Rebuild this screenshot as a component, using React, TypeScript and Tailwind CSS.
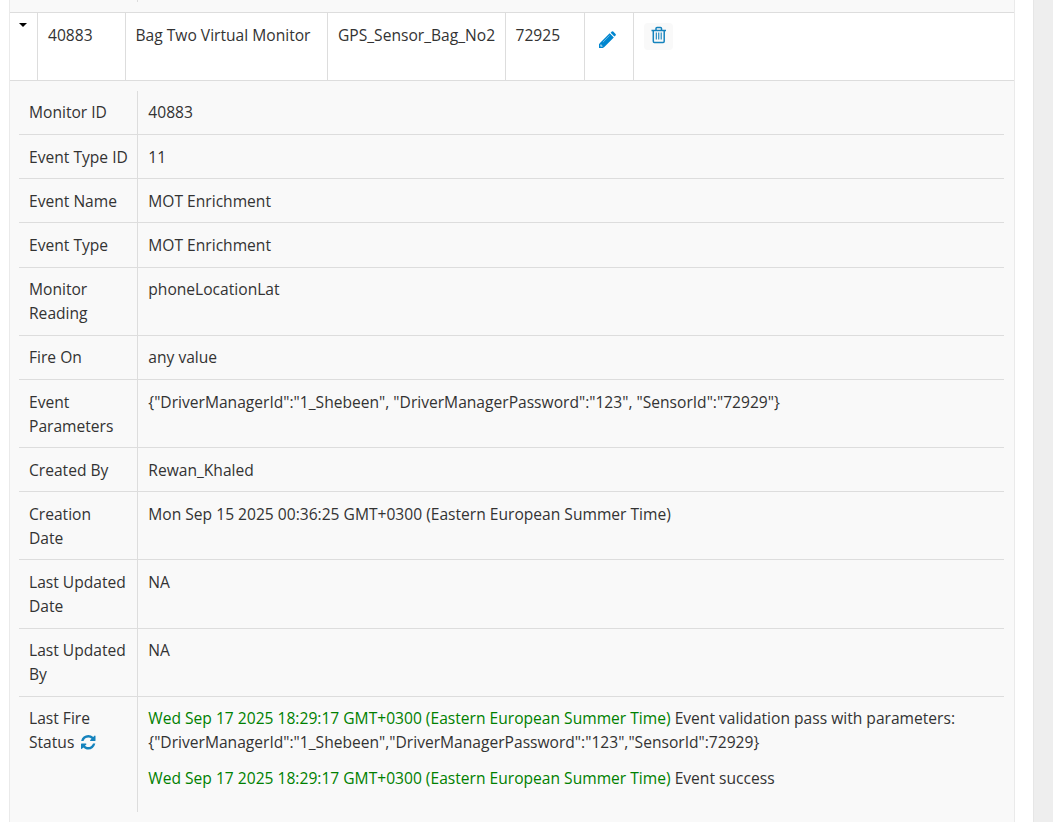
import React from "react";

const rows: { label: string; value: string; height: string; pad: string }[] = [
  { label: "Monitor ID", value: "40883", height: "h-[44px]", pad: "pt-[9px]" },
  { label: "Event Type ID", value: "11", height: "h-[44px]", pad: "pt-[10px]" },
  { label: "Event Name", value: "MOT Enrichment", height: "h-[44px]", pad: "pt-[10px]" },
  { label: "Event Type", value: "MOT Enrichment", height: "h-[45px]", pad: "pt-[10px]" },
  { label: "Monitor Reading", value: "phoneLocationLat", height: "h-[68px]", pad: "pt-[9px]" },
  { label: "Fire On", value: "any value", height: "h-[44px]", pad: "pt-[9px]" },
  {
    label: "Event Parameters",
    value: '{"DriverManagerId":"1_Shebeen", "DriverManagerPassword":"123", "SensorId":"72929"}',
    height: "h-[68px]",
    pad: "pt-[10px]",
  },
  { label: "Created By", value: "Rewan_Khaled", height: "h-[44px]", pad: "pt-[10px]" },
  {
    label: "Creation Date",
    value: "Mon Sep 15 2025 00:36:25 GMT+0300 (Eastern European Summer Time)",
    height: "h-[68px]",
    pad: "pt-[10px]",
  },
  { label: "Last Updated Date", value: "NA", height: "h-[69px]", pad: "pt-[10px]" },
  { label: "Last Updated By", value: "NA", height: "h-[68px]", pad: "pt-[9px]" },
];

function PencilIcon() {
  return (
    <svg viewBox="0 0 17 17" className="h-[17px] w-[17px]" fill="#0086cf">
      <path d="M11.600 1.700 12.800.500q.700-.600 1.400 0l2.400 2.400q.600.700 0 1.400L15.400 5.500z" />
      <path fillRule="evenodd" d="M10.700 2.300 14.800 6.400 5.300 15.900 3.800 17H0V13.200L1.200 11.800zM1.500 13.500V15.600H3.500V14.800H2.400V13.500z" />
      <path d="M3.900 11.200 10.600 4.500" fill="none" stroke="#a9d8f1" strokeWidth=".6" />
    </svg>
  );
}

function TrashIcon() {
  return (
    <svg viewBox="0 0 16 18" className="h-[18px] w-4" fill="none" stroke="#1583bd">
      <path d="M.5 4.500H15" strokeWidth="1.500" />
      <path d="M5 4.500V2.500Q5 1.500 6 1.500H9.500Q10.500 1.500 10.500 2.500V4.500M2.300 4.500V15.200Q2.300 16.400 3.400 16.400H12.100Q13.200 16.400 13.200 15.200V4.500" strokeWidth="1.500" />
      <path d="M5.300 6.500V13.500M7.750 6.500V13.500M10.200 6.500V13.500" strokeWidth="1.100" />
    </svg>
  );
}

function RefreshIcon() {
  return (
    <svg viewBox="0 0 1536 1536" className="ml-[7px] inline-block h-[14.5px] w-[14.5px] align-[-1.5px]" fill="#1583bd">
      <path d="M1511 928q0 5-1 7-64 268-268 434.500t-478 166.500q-146 0-282.500-55t-243.500-157l-129 129q-19 19-45 19t-45-19-19-45v-448q0-26 19-45t45-19h448q26 0 45 19t19 45-19 45l-137 137q71 66 161 102t187 36q134 0 250-65t186-179q11-17 53-117 8-23 30-23h192q13 0 22.500 9.500t9.500 22.500zM1536 128v448q0 26-19 45t-45 19h-448q-26 0-45-19t-19-45 19-45l138-138q-148-137-349-137-134 0-250 65t-186 179q-11 17-53 117-8 23-30 23h-199q-13 0-22.500-9.500t-9.500-22.500v-7q65-268 270-434.500t480-166.500q146 0 284 55.500t245 156.500l130-129q19-19 45-19t45 19 19 45z" />
    </svg>
  );
}

export default function App() {
  return (
    <div className="flex h-[822px] w-full overflow-hidden bg-white pl-[9px] font-['Open_Sans',sans-serif] text-[15.6px] leading-6 text-[#333]">
      <main className="w-[1006px] shrink-0 border-x border-[#eaeaea] bg-[#f9f9f9]">
        <div className="flex h-3 items-start pl-[127px]">
          <div className="h-0.5 w-px bg-[#ddd]" />
        </div>
        <div className="flex h-[69px] border-y border-[#ddd] bg-white">
          <div className="w-7 shrink-0 border-r border-[#ddd] pl-[9px] pt-[10px]">
            <div className="h-0 w-0 border-x-4 border-t-4 border-x-transparent border-t-black" />
          </div>
          <div className="w-[88px] shrink-0 border-r border-[#ddd] pl-[10px] pt-[10px]">40883</div>
          <div className="w-[202px] shrink-0 whitespace-nowrap border-r border-[#ddd] pl-[9.5px] pt-[10px]">Bag Two Virtual Monitor</div>
          <div className="w-[178px] shrink-0 whitespace-nowrap border-r border-[#ddd] pl-[10px] pt-[10px]">GPS_Sensor_Bag_No2</div>
          <div className="w-[79px] shrink-0 border-r border-[#ddd] pl-[9.5px] pt-[10px]">72925</div>
          <div className="w-[49px] shrink-0 border-r border-[#ddd] pl-[14px] pt-[18px]">
            <PencilIcon />
          </div>
          <div className="pl-[10px] pt-[10px]">
            <div className="flex h-[27px] w-[29px] items-start rounded bg-[#f9f9f9] pl-[6.5px] pt-[3px]">
              <TrashIcon />
            </div>
          </div>
        </div>
        <div className="pl-[9px] pr-[10px] pt-[10px]">
          {rows.map((row) => (
            <div key={row.label} className={`flex border-b border-[#ddd] ${row.height}`}>
              <div className={`w-[119px] shrink-0 border-r border-[#ddd] pl-[10px] pr-[8px] ${row.pad}`}>{row.label}</div>
              <div className={`whitespace-nowrap pl-[10.3px] ${row.pad}`}>{row.value}</div>
            </div>
          ))}
          <div className="flex h-[115px]">
            <div className="w-[119px] shrink-0 border-r border-[#ddd] pl-[10px] pt-[9px]">
              Last Fire
              <br />
              Status
              <RefreshIcon />
            </div>
            <div className="whitespace-nowrap pl-[10.3px] pt-[9px]">
              <p>
                <span className="text-[#008000]">Wed Sep 17 2025 18:29:17 GMT+0300 (Eastern European Summer Time)</span> Event validation pass with parameters:
              </p>
              <p>{'{"DriverManagerId":"1_Shebeen","DriverManagerPassword":"123","SensorId":72929}'}</p>
              <p className="mt-3">
                <span className="text-[#008000]">Wed Sep 17 2025 18:29:17 GMT+0300 (Eastern European Summer Time)</span> Event success
              </p>
            </div>
          </div>
        </div>
      </main>
      <div className="w-[18px] shrink-0 bg-white" />
      <div className="flex-1 border-l border-[#e6e6e6] bg-[#eee]" />
    </div>
  );
}
